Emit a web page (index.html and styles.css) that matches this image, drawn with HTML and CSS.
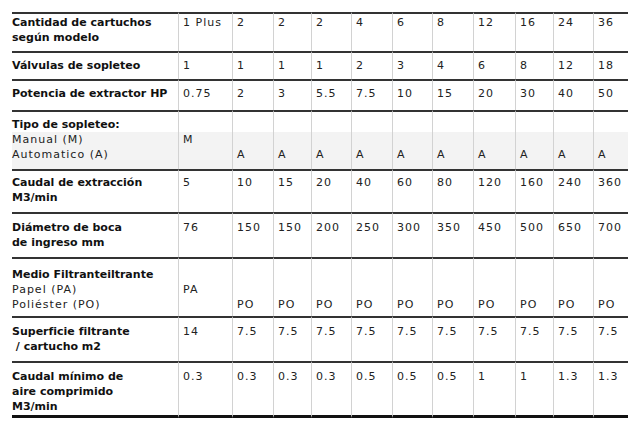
FILE: index.html
```html
<!DOCTYPE html>
<html lang="es">
<head>
<meta charset="utf-8">
<title>Especificaciones</title>
<link rel="stylesheet" href="styles.css">
</head>
<body>
<div class="page">
<table class="spec">
<colgroup>
<col class="w-label"><col class="w54"><col class="w41"><col class="w38"><col class="w40"><col class="w41"><col class="w40"><col class="w41"><col class="w42"><col class="w38"><col class="w40"><col class="w35">
</colgroup>
<tbody>
<tr class="r1"><th>Cantidad de cartuchos<br>según modelo</th><td>1 Plus</td><td>2</td><td>2</td><td>2</td><td>4</td><td>6</td><td>8</td><td>12</td><td>16</td><td>24</td><td>36</td></tr>
<tr class="r2"><th>Válvulas de sopleteo</th><td>1</td><td>1</td><td>1</td><td>1</td><td>2</td><td>3</td><td>4</td><td>6</td><td>8</td><td>12</td><td>18</td></tr>
<tr class="r3"><th>Potencia de extractor HP</th><td>0.75</td><td>2</td><td>3</td><td>5.5</td><td>7.5</td><td>10</td><td>15</td><td>20</td><td>30</td><td>40</td><td>50</td></tr>
<tr class="r4a"><th>Tipo de sopleteo:</th><td></td><td></td><td></td><td></td><td></td><td></td><td></td><td></td><td></td><td></td><td></td></tr>
<tr class="r4b sub shade"><th class="note">Manual (M)<br>Automatico (A)</th><td>M</td><td><br>A</td><td><br>A</td><td><br>A</td><td><br>A</td><td><br>A</td><td><br>A</td><td><br>A</td><td><br>A</td><td><br>A</td><td><br>A</td></tr>
<tr class="r5"><th>Caudal de extracción<br>M3/min</th><td>5</td><td>10</td><td>15</td><td>20</td><td>40</td><td>60</td><td>80</td><td>120</td><td>160</td><td>240</td><td>360</td></tr>
<tr class="r6"><th>Diámetro de boca<br>de ingreso mm</th><td>76</td><td>150</td><td>150</td><td>200</td><td>250</td><td>300</td><td>350</td><td>450</td><td>500</td><td>650</td><td>700</td></tr>
<tr class="r7a"><th>Medio Filtranteiltrante</th><td></td><td></td><td></td><td></td><td></td><td></td><td></td><td></td><td></td><td></td><td></td></tr>
<tr class="r7b sub"><th class="note">Papel (PA)<br>Poliéster (PO)</th><td>PA</td><td><br>PO</td><td><br>PO</td><td><br>PO</td><td><br>PO</td><td><br>PO</td><td><br>PO</td><td><br>PO</td><td><br>PO</td><td><br>PO</td><td><br>PO</td></tr>
<tr class="r8"><th>Superficie filtrante<br>&nbsp;/ cartucho m2</th><td>14</td><td>7.5</td><td>7.5</td><td>7.5</td><td>7.5</td><td>7.5</td><td>7.5</td><td>7.5</td><td>7.5</td><td>7.5</td><td>7.5</td></tr>
<tr class="r9 last"><th>Caudal mínimo de<br>aire comprimido<br>M3/min</th><td>0.3</td><td>0.3</td><td>0.3</td><td>0.3</td><td>0.5</td><td>0.5</td><td>0.5</td><td>1</td><td>1</td><td>1.3</td><td>1.3</td></tr>
</tbody>
</table>
</div>
</body>
</html>
```

FILE: styles.css
```css
html, body {
  margin: 0;
  background: #ffffff;
}

body {
  font-family: "DejaVu Sans", Verdana, sans-serif;
  font-size: 11px;
  line-height: 15px;
  color: #222222;
}

.page {
  padding: 12px 0 0 12px;
}

.spec {
  border-collapse: separate;
  border-spacing: 0;
  table-layout: fixed;
  width: 616px;
}

.w-label { width: 166px; }
.w54 { width: 54px; }
.w41 { width: 41px; }
.w38 { width: 38px; }
.w40 { width: 40px; }
.w42 { width: 42px; }
.w35 { width: 35px; }

.spec th,
.spec td {
  vertical-align: top;
  text-align: left;
  border-top: 2px solid #333333;
  padding: 5px 0 0 4px;
  white-space: nowrap;
}

.spec th {
  font-weight: bold;
  color: #111111;
  padding-left: 0;
}

.spec td {
  border-left: 1px solid #d2d2d2;
  letter-spacing: 1px;
}

.spec th.note {
  font-weight: normal;
  letter-spacing: 1px;
  color: #222222;
}

.spec .sub th,
.spec .sub td {
  border-top: 0;
  padding-top: 0;
}

.shade {
  background: #f3f3f3;
}

.r1 { height: 39px; }
.r1 th, .r1 td { padding-top: 1px; }
.r2 { height: 28px; }
.r3 { height: 31px; }
.r4a { height: 22px; }
.r4b { height: 37px; }
.r5 { height: 43px; }
.r5 th, .r5 td { padding-top: 4px; }
.r6 { height: 45px; }
.r6 th, .r6 td { padding-top: 6px; }
.r7a { height: 25px; }
.r7a th, .r7a td { padding-top: 8px; }
.r7b { height: 34px; }
.r8 { height: 45px; }
.r8 th, .r8 td { padding-top: 6px; }
.r9 { height: 57px; }
.r9 th, .r9 td { padding-top: 6px; }

.last th,
.last td {
  border-bottom: 3px solid #111111;
}
```
